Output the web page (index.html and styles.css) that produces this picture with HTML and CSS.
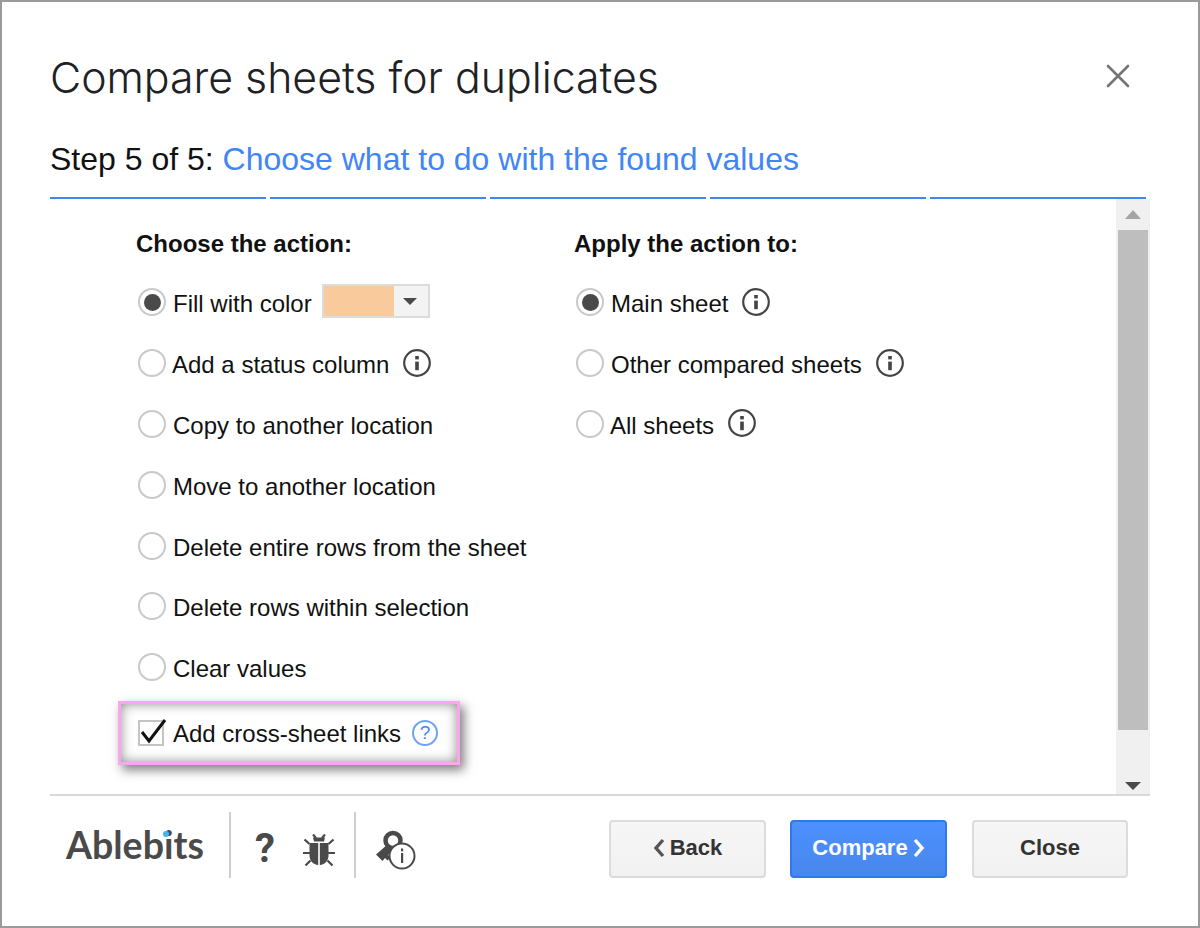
FILE: index.html
```html
<!DOCTYPE html>
<html lang="en">
<head>
<meta charset="utf-8">
<title>Compare sheets for duplicates</title>
<link rel="stylesheet" href="styles.css">
</head>
<body>
<div class="dialog">
  <header class="head">
    <h1 class="title">Compare sheets for duplicates</h1>
    <svg class="x" viewBox="0 0 24 24" width="24" height="24"><path d="M2 2 22 22M22 2 2 22" stroke="#757575" stroke-width="2.600" stroke-linecap="round" fill="none"/></svg>
  </header>
  <h2 class="step">Step 5 of 5: <span class="step-name">Choose what to do with the found values</span></h2>
  <div class="progress"><i></i><i></i><i></i><i></i><i></i></div>
  <div class="body">
    <main class="content">
      <section class="col col-left">
        <h3 class="col-title">Choose the action:</h3>
        <div class="row"><span class="radio on"></span><span class="label">Fill with color</span>
          <span class="swatch"><span class="swatch-color"></span><span class="swatch-arrow"></span></span></div>
        <div class="row"><span class="radio"></span><span class="label tight">Add a status column</span>
          <svg class="info" viewBox="0 0 28 28" width="28" height="28"><circle cx="14" cy="14" r="12.800" fill="none" stroke="#444" stroke-width="2.200"/><rect x="12.200" y="7" width="3.600" height="3.400" fill="#444"/><rect x="12.200" y="12.600" width="3.600" height="8.600" fill="#444"/></svg></div>
        <div class="row"><span class="radio"></span><span class="label">Copy to another location</span></div>
        <div class="row"><span class="radio"></span><span class="label">Move to another location</span></div>
        <div class="row"><span class="radio"></span><span class="label">Delete entire rows from the sheet</span></div>
        <div class="row"><span class="radio"></span><span class="label">Delete rows within selection</span></div>
        <div class="row"><span class="radio"></span><span class="label">Clear values</span></div>
        <div class="callout">
          <span class="check"><svg viewBox="0 0 30 26" width="30" height="26"><path d="M4 12 11 21 27 0" fill="none" stroke="#111" stroke-width="3"/></svg></span>
          <span class="label">Add cross-sheet links</span>
          <span class="help">?</span>
        </div>
      </section>
      <section class="col col-right">
        <h3 class="col-title">Apply the action to:</h3>
        <div class="row"><span class="radio on"></span><span class="label">Main sheet</span>
          <svg class="info" viewBox="0 0 28 28" width="28" height="28"><circle cx="14" cy="14" r="12.800" fill="none" stroke="#444" stroke-width="2.200"/><rect x="12.200" y="7" width="3.600" height="3.400" fill="#444"/><rect x="12.200" y="12.600" width="3.600" height="8.600" fill="#444"/></svg></div>
        <div class="row"><span class="radio"></span><span class="label">Other compared sheets</span>
          <svg class="info" viewBox="0 0 28 28" width="28" height="28"><circle cx="14" cy="14" r="12.800" fill="none" stroke="#444" stroke-width="2.200"/><rect x="12.200" y="7" width="3.600" height="3.400" fill="#444"/><rect x="12.200" y="12.600" width="3.600" height="8.600" fill="#444"/></svg></div>
        <div class="row"><span class="radio"></span><span class="label tight">All sheets</span>
          <svg class="info" viewBox="0 0 28 28" width="28" height="28"><circle cx="14" cy="14" r="12.800" fill="none" stroke="#444" stroke-width="2.200"/><rect x="12.200" y="7" width="3.600" height="3.400" fill="#444"/><rect x="12.200" y="12.600" width="3.600" height="8.600" fill="#444"/></svg></div>
      </section>
    </main>
    <div class="scrollbar">
      <span class="arrow-up"></span>
      <span class="thumb"></span>
      <span class="arrow-down"></span>
    </div>
  </div>
  <footer class="foot">
    <div class="logo">Ablebits</div>
    <div class="tools">
      <span class="qmark">?</span>
      <svg class="bug" viewBox="0 0 32 32" width="32" height="32"><g fill="#4a4a4a"><path d="M11 7.500 10 3.500h12l-1 4z"/><path d="M6.500 9h8.700v22C10 30.500 6.500 27 6.500 21z"/><path d="M25.500 9h-8.700v22c5.200-.5 8.700-4 8.700-10z"/></g><path d="M10 .5l3 3.500M22 .5l-3 3.500M1.500 5.500l5 4.500M30.500 5.500l-5 4.500M0 19h7M32 19h-7M2.500 31.500l5-5M29.500 31.500l-5-5" fill="none" stroke="#4a4a4a" stroke-width="2.200"/></svg>
    </div>
    <div class="tools key-tool">
      <svg class="key" viewBox="0 0 42 40" width="42" height="40"><circle cx="18" cy="10.500" r="7.500" fill="none" stroke="#4a4a4a" stroke-width="4.500"/><path d="M13 14 1 24.500l6.500 6.500 2.500-3 2.500 2.500 3-3-2.500-2.500 7-7z" fill="#4a4a4a"/><circle cx="27" cy="26" r="12.500" fill="#fff" stroke="#4a4a4a" stroke-width="2"/><rect x="26" y="18.500" width="2.200" height="2.800" fill="#4a4a4a"/><rect x="26" y="23" width="2.200" height="10" fill="#4a4a4a"/></svg>
    </div>
    <div class="buttons">
      <button class="btn"><svg class="chev" viewBox="0 0 12 20" width="12" height="20"><path d="M10 2 3 10l7 8" fill="none" stroke="#555" stroke-width="3.400"/></svg>Back</button>
      <button class="btn primary">Compare<svg class="chev" viewBox="0 0 12 20" width="12" height="20"><path d="M2 2l7 8-7 8" fill="none" stroke="#fff" stroke-width="3.400"/></svg></button>
      <button class="btn btn-close">Close</button>
    </div>
  </footer>
</div>
</body>
</html>
```
FILE: styles.css
```css
* { box-sizing: border-box; }
html, body { margin: 0; padding: 0; background: #fff; }
body { width: 1200px; height: 928px; overflow: hidden; font-family: "Liberation Sans", Arial, sans-serif; color: #111; }
.dialog { width: 1200px; height: 928px; border: 2px solid #9a9a9a; padding: 0 48px; display: flex; flex-direction: column; }
.head { height: 139px; flex: none; display: flex; align-items: flex-start; justify-content: space-between; padding-top: 49px; padding-right: 12px; }
.title { margin: 0; font-family: "Inter", sans-serif; font-weight: 300; font-size: 42.800px; line-height: 54px; color: #202124; white-space: nowrap; }
.x { margin-top: 13px; margin-right: 8px; }
.step { margin: 0; flex: none; height: 41px; font-weight: 400; font-size: 32px; line-height: 36px; color: #111; }
.step-name { color: #4285f4; }
.progress { flex: none; display: flex; gap: 4px; height: 2px; margin-top: 15px; width: 1096px; }
.progress i { flex: 1; background: #4285f4; }
.body { flex: none; height: 597px; display: flex; width: 1100px; border-bottom: 2px solid #d9d9d9; }
.content { flex: none; width: 1066px; display: flex; padding-left: 86px; }
.col { display: flex; flex-direction: column; }
.col-left { width: 438px; }
.col-title { margin: 0 0 13px; padding-top: 29px; font-size: 24px; line-height: 32px; font-weight: 700; color: #111; box-sizing: content-box; height: 32px; }
.row { height: 60.800px; flex: none; display: flex; align-items: center; padding-left: 2px; }
.radio { flex: none; width: 28px; height: 28px; margin-top: -2px; border-radius: 50%; border: 2px solid #c9c9c9; background: #fff; position: relative; margin-right: 7px; }
.radio.on::after { content: ""; position: absolute; inset: 3.500px; border-radius: 50%; background: #4a4a4a; }
.label { font-size: 24px; line-height: 30px; margin-top: 2px; color: #111; white-space: nowrap; }
.tight { margin-left: -1px; }
.swatch { display: flex; width: 108px; height: 34px; border: 2px solid #dcdcdc; margin-left: 10px; margin-top: -4px; background: #f3f3f3; }
.swatch-color { width: 70px; background: #f9cb9c; }
.swatch-arrow { flex: 1; position: relative; }
.swatch-arrow::after { content: ""; position: absolute; left: 9px; top: 12px; border: 7px solid transparent; border-top: 7px solid #4a4a4a; border-bottom: 0; }
.info { flex: none; margin-left: 14px; margin-top: -3px; }
.callout { flex: none; width: 342px; height: 64px; margin: 2px 0 0 -18px; border: 3px solid #f9a6f1; display: flex; align-items: center; padding-left: 17px; background: #fff; box-shadow: 4px 5px 10px rgba(0,0,0,.5), inset 0 0 12px rgba(0,0,0,.45); }
.check { flex: none; width: 26px; height: 26px; border: 2px solid #c4c4c4; margin-right: 9px; position: relative; }
.check svg { position: absolute; left: -2px; top: -2px; overflow: visible; }
.help { flex: none; width: 26px; height: 26px; margin-left: 11px; border: 2px solid #6fa2f7; border-radius: 50%; color: #4285f4; font-size: 19px; line-height: 22px; text-align: center; }
.scrollbar { flex: none; width: 34px; background: #f0f0f0; display: flex; flex-direction: column; align-items: center; padding: 0 2px; }
.arrow-up { flex: none; margin: 11px 0; border: 8px solid transparent; border-bottom: 9px solid #a5a5a5; border-top: 0; }
.thumb { flex: none; width: 100%; height: 500px; background: #bebebe; }
.arrow-down { flex: none; margin-top: 52px; border: 8px solid transparent; border-top: 8px solid #4a4a4a; border-bottom: 0; }
.foot { flex: 1; display: flex; align-items: flex-start; width: 1100px; padding-top: 16px; }
.logo { flex: none; width: 181px; height: 66px; padding-left: 16px; font-family: "Lato", sans-serif; font-weight: 700; font-size: 37.500px; line-height: 66px; color: #4a4a4a; border-right: 2px solid #cfcfcf; position: relative; }
.logo::after { content: ""; position: absolute; left: 113px; top: 19px; width: 6px; height: 6px; border-radius: 50%; background: #3fb5ee; }
.tools { flex: none; height: 66px; width: 125px; display: flex; align-items: center; border-right: 2px solid #cfcfcf; padding-left: 22px; }
.qmark { font-family: "Roboto", sans-serif; font-size: 40px; font-weight: 700; line-height: 44px; margin-top: 8px; color: #4a4a4a; width: 24px; margin-right: 26px; text-align: center; }
.bug { margin-top: 10px; }
.key-tool { border-right: 0; width: 100px; padding-left: 19px; }
.key { margin-top: 10px; }
.buttons { flex: 1; display: flex; gap: 24px; justify-content: flex-end; padding-right: 22px; padding-top: 8px; }
.btn { width: 157px; height: 58px; padding: 0 0 2px; display: flex; align-items: center; justify-content: center; gap: 5px; border: 2px solid #dcdcdc; border-radius: 4px; background: linear-gradient(#f6f6f6, #f1f1f1); font-family: "Liberation Sans", Arial, sans-serif; font-weight: 700; font-size: 22px; color: #333; }
.btn.primary { background: linear-gradient(#4d90fe, #4787ed); border-color: #3079ed; color: #fff; }
.btn-close { width: 156px; margin-left: 1px; }
```
